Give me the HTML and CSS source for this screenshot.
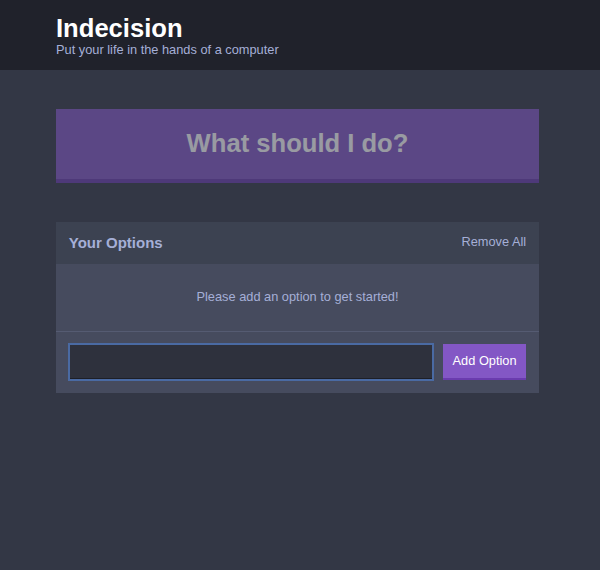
FILE: index.html
```html
<!DOCTYPE html>
<html lang="en">
<head>
<meta charset="utf-8">
<title>Indecision</title>
<link rel="stylesheet" href="styles.css">
</head>
<body>
  <header class="header">
    <div class="container">
      <h1 class="header__title">Indecision</h1>
      <h2 class="header__subtitle">Put your life in the hands of a computer</h2>
    </div>
  </header>
  <main class="container">
    <button class="big-button" disabled>What should I do?</button>
    <section class="widget">
      <div class="widget-header">
        <h3 class="widget-header__title">Your Options</h3>
        <button class="button button--link">Remove All</button>
      </div>
      <p class="widget__message">Please add an option to get started!</p>
      <form class="add-option">
        <input class="add-option__input" type="text" name="option">
        <button class="button" type="button">Add Option</button>
      </form>
    </section>
  </main>
</body>
</html>
```
FILE: styles.css
```css
html {
  font-size: 50%;
}

body {
  margin: 0;
  background: #333745;
  color: #ffffff;
  font-family: "Liberation Sans", Arial, Helvetica, sans-serif;
  font-size: 1.6rem;
  line-height: 1.15;
}

.container {
  width: 483px;
  margin: 0 0 0 56px;
}

.header {
  background: #20222b;
  padding: 14px 0 12px;
  margin-bottom: 39px;
}

.header__title {
  margin: 0;
  font-size: 3.2rem;
  font-weight: bold;
  line-height: 1.15;
}

.header__subtitle {
  margin: 0;
  color: #a5afd7;
  font-size: 1.6rem;
  font-weight: normal;
  line-height: 1.15;
}

.big-button {
  display: block;
  width: 100%;
  background: #8357c5;
  border: none;
  border-bottom: 0.6rem solid #6a3bae;
  color: #ffffff;
  font-family: inherit;
  font-weight: bold;
  font-size: 3.2rem;
  line-height: 1.15;
  padding: 20px;
  margin-bottom: 39px;
}

.big-button:disabled {
  opacity: 0.5;
}

.widget {
  background: #464b5e;
  margin-bottom: 4.8rem;
}

.widget-header {
  background: #3c4251;
  color: #a5afd7;
  display: flex;
  justify-content: space-between;
  align-items: center;
  padding: 12.5px 1.6rem;
}

.widget-header__title {
  margin: 0;
  font-size: 15px;
  font-weight: bold;
  line-height: 1.15;
}

.widget__message {
  margin: 0;
  border-bottom: 1px solid #555b72;
  color: #a5afd7;
  padding: 26px;
  text-align: center;
}

.add-option {
  display: flex;
  padding: 1.6rem;
  margin: 0;
}

.add-option__input {
  flex-grow: 1;
  background: #2e313d;
  border: none;
  border-bottom: 0.3rem solid #1d1f27;
  color: #a5afd7;
  font-family: inherit;
  font-size: 1.6rem;
  margin-right: 1.2rem;
  padding: 1.2rem;
  outline: 2px solid #4a6aa3;
  outline-offset: -1px;
}

.button {
  background: #8357c5;
  border: none;
  border-bottom: 0.3rem solid #6a3bae;
  color: #ffffff;
  font-family: inherit;
  font-size: 1.6rem;
  font-weight: normal;
  line-height: 1.15;
  padding: 1.2rem;
}

.button--link {
  background: none;
  border: none;
  color: #a5afd7;
  padding: 0;
}
```
